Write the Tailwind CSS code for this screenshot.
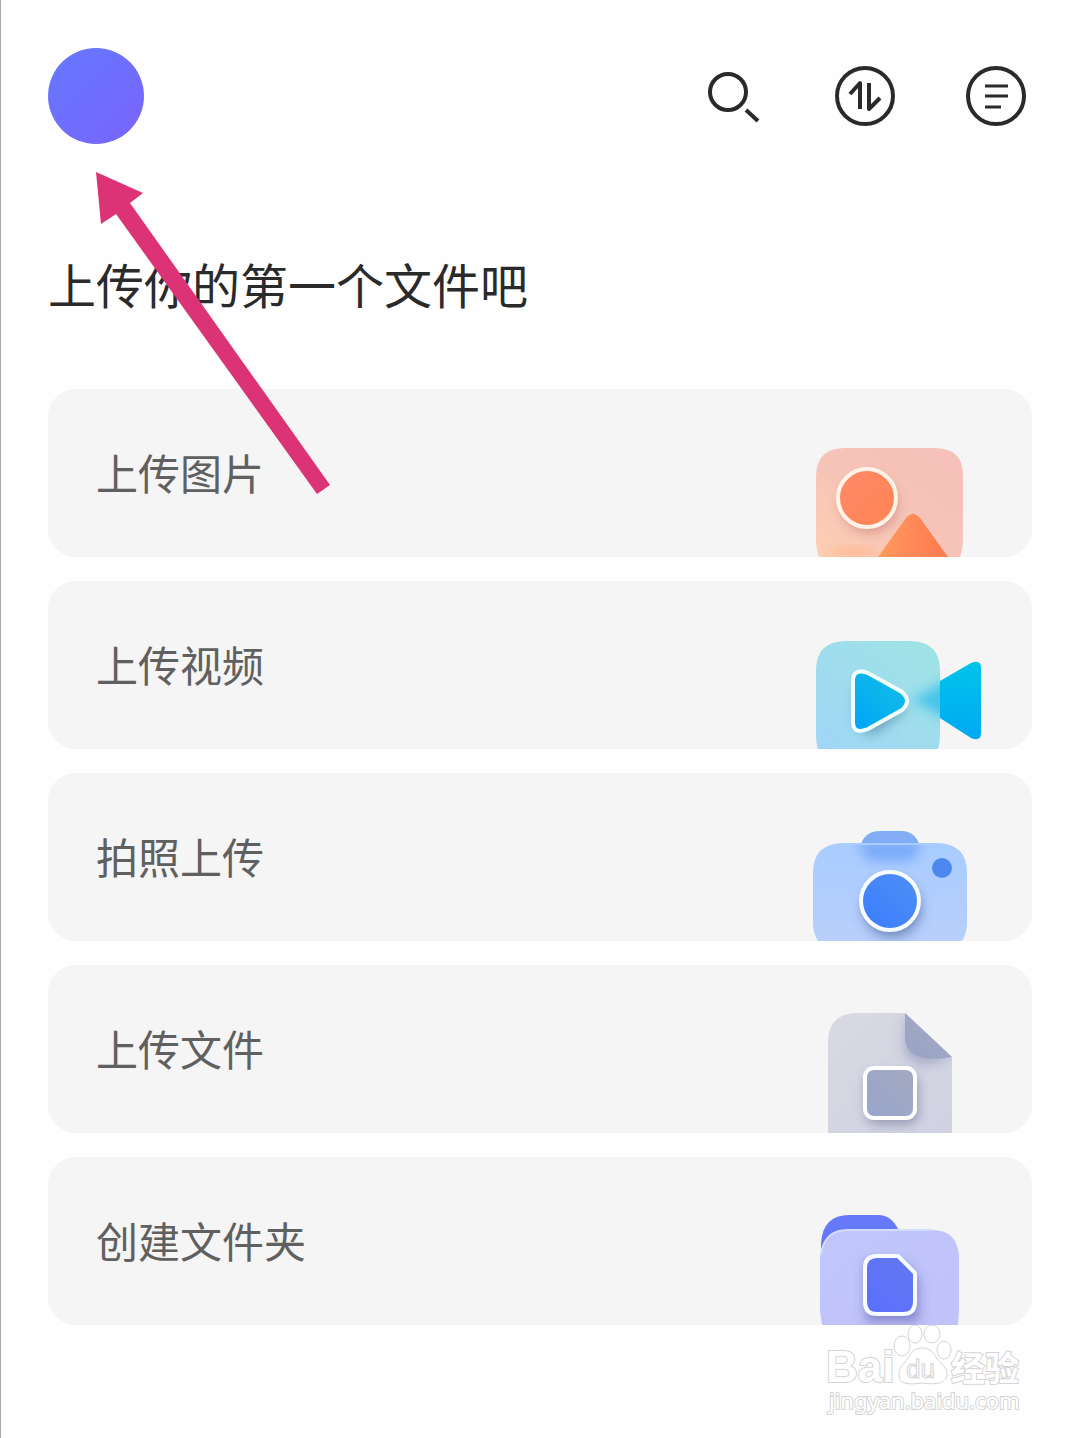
<!DOCTYPE html>
<html lang="zh-CN">
<head>
<meta charset="utf-8">
<meta name="viewport" content="width=device-width, initial-scale=1">
<title>上传文件</title>
<script src="https://cdn.jsdelivr.net/npm/@tailwindcss/browser@4"></script>
</head>
<body class="relative min-h-screen overflow-x-hidden border-l border-[#a8a8a8] bg-[#fefefe] pl-[47px] pr-12 pt-12 font-['Noto_Sans_CJK_SC',sans-serif] text-[#2a2a2a]">
  <header class="flex items-center justify-between">
    <button type="button" aria-label="头像" class="size-24 rounded-full bg-linear-to-br from-[#6478ff] to-[#7864fa]"></button>
    <nav class="flex items-center gap-[71px] pr-[6px]">
      <button type="button" aria-label="搜索">
        <svg class="size-[60px]" viewBox="0 0 60 60" fill="none" stroke="#2a2a2a" stroke-width="4"><circle cx="24" cy="26" r="18"/><path d="M42 44L54 55"/></svg>
      </button>
      <button type="button" aria-label="传输">
        <svg class="size-[60px]" viewBox="0 0 60 60" fill="none" stroke="#2a2a2a" stroke-width="4"><circle cx="30" cy="30" r="28"/><path d="M15 28L25 17V43M34 17V43L45 32" stroke-linejoin="round"/></svg>
      </button>
      <button type="button" aria-label="菜单">
        <svg class="size-[60px]" viewBox="0 0 60 60" fill="none" stroke="#2a2a2a"><circle cx="30" cy="30" r="28" stroke-width="4"/><path d="M19 20H42M19 30H42M19 41H35" stroke-width="3"/></svg>
      </button>
    </nav>
  </header>

  <main>
    <h1 class="mt-[103px] text-[48px] leading-[72px]">上传你的第一个文件吧</h1>
    <div class="mt-[70px] flex flex-col gap-6">
      <button type="button" class="flex h-[168px] items-end justify-between overflow-hidden rounded-[28px] bg-[#f5f5f5] pl-12 pr-9 text-[42px] text-[#606060]">
        <span class="self-center pb-1">上传图片</span>
        <svg class="h-32 w-48 shrink-0" viewBox="0 0 192 128" aria-hidden="true">
          <defs>
            <linearGradient id="pic" x1="0" y1="1" x2="1" y2="0"><stop offset="0" stop-color="#ffceb2"/><stop offset=".45" stop-color="#f6c4b8"/><stop offset="1" stop-color="#f6c0b8"/></linearGradient>
            <linearGradient id="sun" x1="0" y1="0" x2="1" y2="1"><stop stop-color="#ff8a68"/><stop offset="1" stop-color="#ff8454"/></linearGradient>
            <linearGradient id="hill" x1="0" y1="0" x2="1" y2="0"><stop stop-color="#ff9a5c"/><stop offset="1" stop-color="#ff7852"/></linearGradient>
            <filter id="soft" x="-40%" y="-40%" width="180%" height="180%"><feGaussianBlur stdDeviation="6"/></filter>
          </defs>
          <path d="M15 128Q12 120 12 110V48Q12 19 41 19H130Q159 19 159 46V110Q159 120 156 128Z" fill="url(#pic)"/>
          <ellipse cx="50" cy="124" rx="24" ry="5" fill="#ffab78" opacity=".6" filter="url(#soft)"/>
          <circle cx="65" cy="75" r="28" fill="#a65a50" opacity=".45" filter="url(#soft)"/>
          <circle cx="63" cy="69" r="29" fill="url(#sun)" stroke="#fff3e8" stroke-width="4"/>
          <path d="M74 128L102 89Q109 81 116 89L144 128Z" fill="url(#hill)"/>
        </svg>
      </button>

      <button type="button" class="flex h-[168px] items-end justify-between overflow-hidden rounded-[28px] bg-[#f5f5f5] pl-12 pr-9 text-[42px] text-[#606060]">
        <span class="self-center pb-1">上传视频</span>
        <svg class="h-32 w-48 shrink-0" viewBox="0 0 192 128" aria-hidden="true">
          <defs>
            <linearGradient id="vid" x1="1" y1="0" x2="0" y2="1"><stop stop-color="#9fe4e4"/><stop offset="1" stop-color="#9fd6f6"/></linearGradient>
            <linearGradient id="lens" x1="0" y1="0" x2="0" y2="1"><stop stop-color="#00c4e8"/><stop offset="1" stop-color="#00a8f4"/></linearGradient>
            <linearGradient id="play" x1="0" y1="1" x2="1" y2="0"><stop stop-color="#00a4f8"/><stop offset="1" stop-color="#14c0e4"/></linearGradient>
            <clipPath id="vidClip"><path d="M12 20H136V128H12Z"/></clipPath>
          </defs>
          <path d="M136 60L167 42Q177 38 177 47V112Q177 121 167 117L136 97Z" fill="url(#lens)"/>
          <path d="M14 128Q12 122 12 112V50Q12 20 42 20H106Q136 20 136 50V112Q136 122 134 128Z" fill="url(#vid)"/>
          <g clip-path="url(#vidClip)"><path d="M108 79L152 54V103Z" fill="#22b8ea" opacity=".7" filter="url(#soft)"/></g>
          <path d="M52 64V106L70 114L104 88Z" fill="#3c7088" opacity=".5" filter="url(#soft)"/>
          <path d="M49 60Q49 47 64 52L98 71Q108 80 98 89L64 108Q49 114 49 101Z" fill="url(#play)" stroke="#f2fffc" stroke-width="4"/>
        </svg>
      </button>

      <button type="button" class="flex h-[168px] items-end justify-between overflow-hidden rounded-[28px] bg-[#f5f5f5] pl-12 pr-9 text-[42px] text-[#606060]">
        <span class="self-center pb-1">拍照上传</span>
        <svg class="h-32 w-48 shrink-0" viewBox="0 0 192 128" aria-hidden="true">
          <defs>
            <linearGradient id="cam" x1="0" y1="0" x2="0" y2="1"><stop stop-color="#a8ccff"/><stop offset="1" stop-color="#b8cffb"/></linearGradient>
            <linearGradient id="blue" x1="1" y1="0" x2="0" y2="1"><stop stop-color="#5090f4"/><stop offset="1" stop-color="#3a7cff"/></linearGradient>
            <clipPath id="camClip"><path d="M9 32H163V128H9Z"/></clipPath>
          </defs>
          <path d="M56 34Q60 18 76 18H97Q112 18 116 34Z" fill="#82adf4"/>
          <path d="M14 128Q9 120 9 110V60Q9 30 40 30H132Q163 30 163 60V110Q163 120 158 128Z" fill="url(#cam)"/>
          <g clip-path="url(#camClip)"><path d="M52 28H120L108 48H64Z" fill="#6ea2f8" opacity=".8" filter="url(#soft)"/></g>
          <circle cx="88" cy="95" r="29" fill="#304c88" opacity=".55" filter="url(#soft)"/>
          <circle cx="86" cy="88" r="29" fill="url(#blue)" stroke="#f8fcff" stroke-width="4"/>
          <circle cx="138" cy="55" r="10" fill="#4c88f0"/>
        </svg>
      </button>

      <button type="button" class="flex h-[168px] items-end justify-between overflow-hidden rounded-[28px] bg-[#f5f5f5] pl-12 pr-9 text-[42px] text-[#606060]">
        <span class="self-center pb-1">上传文件</span>
        <svg class="h-32 w-48 shrink-0" viewBox="0 0 192 128" aria-hidden="true">
          <defs>
            <linearGradient id="doc" x1="0" y1="0" x2="1" y2="1"><stop stop-color="#d8d9e2"/><stop offset="1" stop-color="#d0d2e2"/></linearGradient>
            <linearGradient id="fold" x1="1" y1="0" x2="0" y2="1"><stop stop-color="#a6aac6"/><stop offset="1" stop-color="#99a3c4"/></linearGradient>
            <linearGradient id="slate" x1="0" y1="1" x2="1" y2="0"><stop stop-color="#98a4cc"/><stop offset="1" stop-color="#a4aabe"/></linearGradient>
            <clipPath id="docClip"><path d="M24 8H101L148 52V128H24Z"/></clipPath>
          </defs>
          <path d="M24 128V38Q24 8 54 8H101L148 52V128Z" fill="url(#doc)"/>
          <g clip-path="url(#docClip)"><path d="M101 10V50L116 60L146 54Z" fill="#8890b4" opacity=".6" filter="url(#soft)"/></g>
          <path d="M101 8V34Q103 51 122 53Q136 55 148 52Z" fill="url(#fold)"/>
          <rect x="62" y="69" width="52" height="50" rx="10" fill="#585c84" opacity=".5" filter="url(#soft)"/>
          <rect x="61" y="63" width="50" height="50" rx="9" fill="url(#slate)" stroke="#fff" stroke-width="4"/>
        </svg>
      </button>

      <button type="button" class="flex h-[168px] items-end justify-between overflow-hidden rounded-[28px] bg-[#f5f5f5] pl-12 pr-9 text-[42px] text-[#606060]">
        <span class="self-center pb-1">创建文件夹</span>
        <svg class="h-32 w-48 shrink-0" viewBox="0 0 192 128" aria-hidden="true">
          <defs>
            <linearGradient id="dir" x1="0" y1="0" x2="1" y2="1"><stop stop-color="#c0c6fd"/><stop offset="1" stop-color="#c0c2f8"/></linearGradient>
            <linearGradient id="page" x1="0" y1="1" x2="1" y2="0"><stop stop-color="#5a70ff"/><stop offset="1" stop-color="#6478ef"/></linearGradient>
          </defs>
          <path d="M17 60V46Q19 18 45 18H74Q88 18 95 34V60Z" fill="#6579f9"/>
          <path d="M18 128L16 114V60Q19 33 44 33H128Q155 33 155 62V114L154 128Z" fill="url(#dir)"/>
          <path d="M17 58Q20 33 44 33H128" fill="none" stroke="#d2dcff" stroke-width="2"/>
          <path d="M62 66H100L114 82V124H62Z" fill="#3c3c9c" opacity=".5" filter="url(#soft)"/>
          <path d="M73 59H94L111 76V105Q111 117 99 117H73Q61 117 61 105V71Q61 59 73 59Z" fill="url(#page)" stroke="#f8fcff" stroke-width="4" stroke-linejoin="round"/>
        </svg>
      </button>
    </div>
  </main>

  <footer class="flex justify-end">
    <svg class="h-24 w-52" viewBox="0 0 208 96" fill="#fff" stroke="#d4d4d4" stroke-width="1" font-family="'Liberation Sans','Noto Sans CJK SC',sans-serif">
      <text x="2" y="57" font-size="44" font-weight="700" paint-order="stroke" stroke-width="2">Bai</text>
      <g><ellipse cx="78" cy="21" rx="8" ry="10"/><ellipse cx="91" cy="9" rx="7" ry="9"/><ellipse cx="108" cy="9" rx="8" ry="9"/><ellipse cx="120" cy="25" rx="7" ry="9"/>
      <path d="M98 23C90 23 87 28 84 33C80 39 75 41 75 50C75 59 83 60 98 58C114 60 123 58 123 49C123 41 116 39 112 32C108 26 105 23 98 23Z"/></g>
      <text x="82" y="53" font-size="26">du</text>
      <text x="127" y="56" font-size="34" font-weight="700" paint-order="stroke" stroke-width="2">经验</text>
      <text x="5" y="84" font-size="22" font-family="'Noto Sans',sans-serif" paint-order="stroke" stroke-width="2">jingyan.baidu.com</text>
    </svg>
  </footer>

  <svg class="pointer-events-none absolute left-[95px] top-[172px] h-[323px] w-[236px]" viewBox="96 172 236 323" fill="#db3375" aria-hidden="true"><path d="M96 172L143 193L130 203L330 485L317 494L116 214L101 224Z"/></svg>
</body>
</html>
